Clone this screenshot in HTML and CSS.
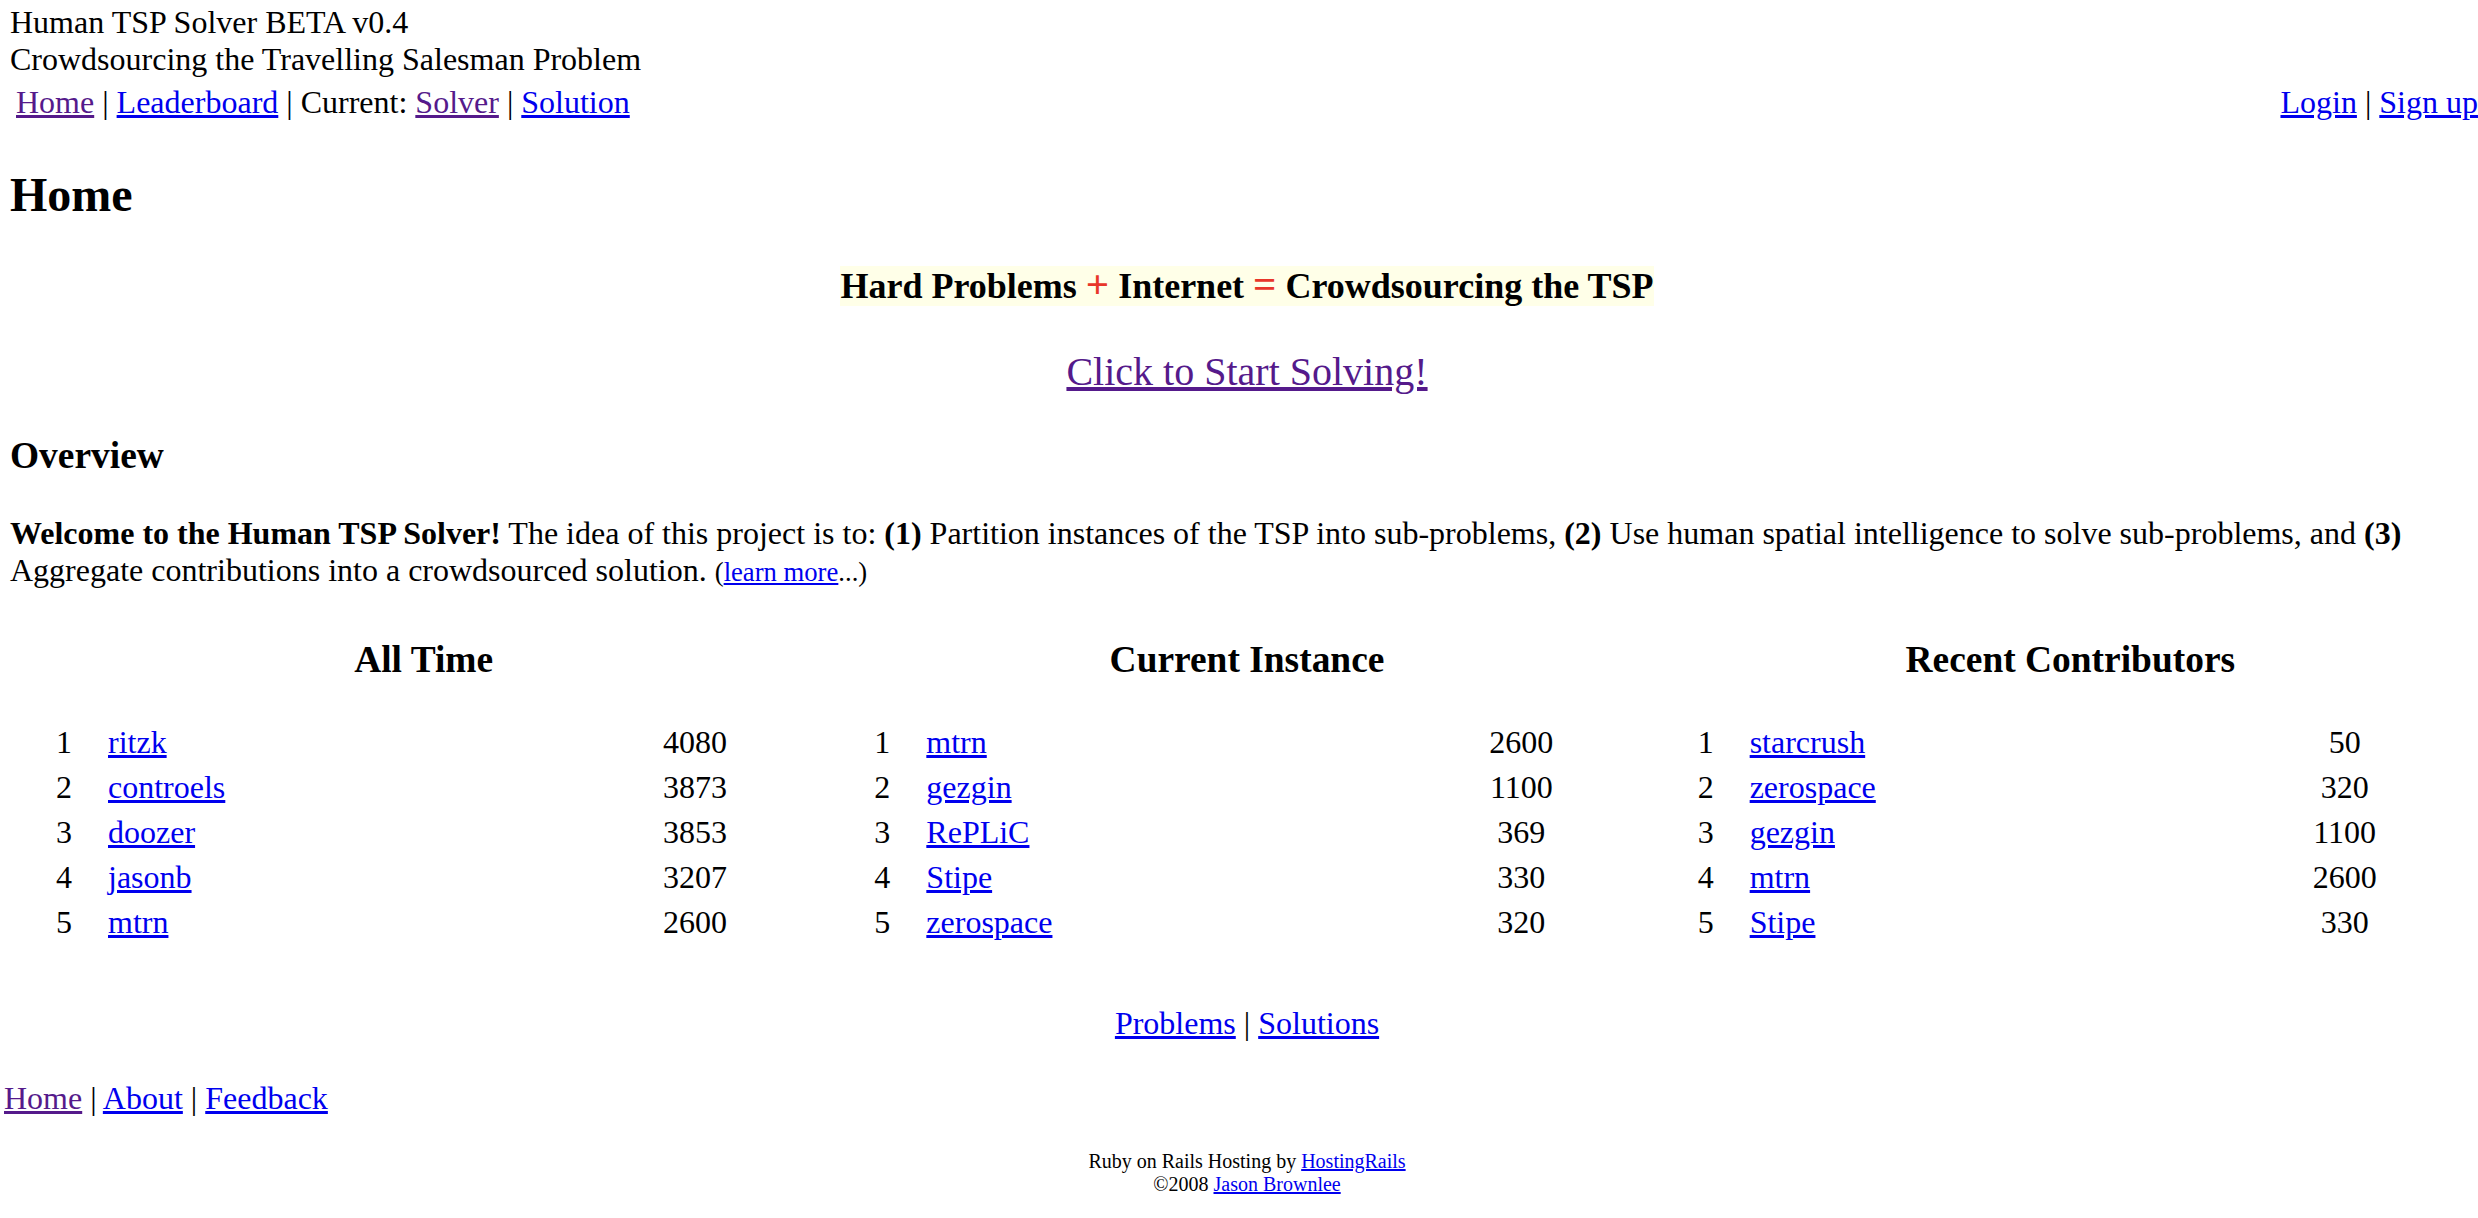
FILE: index.html
```html
<!DOCTYPE html>
<html>
<head>
<meta charset="utf-8">
<title>Human TSP Solver</title>
<link rel="stylesheet" href="styles.css">
</head>
<body>
<div class="site-header">
  <div>Human TSP Solver BETA v0.4</div>
  <div>Crowdsourcing the Travelling Salesman Problem</div>
</div>
<div class="page">
  <table class="nav">
    <tr>
      <td class="nav-left"><a class="visited" href="#">Home</a> | <a href="#">Leaderboard</a> | Current: <a class="visited" href="#">Solver</a> | <a href="#">Solution</a></td>
      <td class="nav-right"><a href="#">Login</a> | <a href="#">Sign up</a></td>
    </tr>
  </table>
  <div class="main">
    <h2>Home</h2>
    <p class="slogan"><span>Hard Problems <b class="op">+</b> Internet <b class="op">=</b> Crowdsourcing the TSP</span></p>
    <p class="start"><a class="visited" href="#">Click to Start Solving!</a></p>
    <h3 class="section">Overview</h3>
    <p class="intro"><b>Welcome to the Human TSP Solver!</b> The idea of this project is to: <b>(1)</b> Partition instances of the TSP into sub-problems, <b>(2)</b> Use human spatial intelligence to solve sub-problems, and <b>(3)</b> Aggregate contributions into a crowdsourced solution. <small>(<a href="#">learn more</a>...)</small></p>
    <table class="boards">
      <tr>
        <td>
          <h3>All Time</h3>
          <table class="ranking ranking-wide">
            <tr><td class="rank">1</td><td class="name"><a href="#">ritzk</a></td><td class="score">4080</td></tr>
            <tr><td class="rank">2</td><td class="name"><a href="#">controels</a></td><td class="score">3873</td></tr>
            <tr><td class="rank">3</td><td class="name"><a href="#">doozer</a></td><td class="score">3853</td></tr>
            <tr><td class="rank">4</td><td class="name"><a href="#">jasonb</a></td><td class="score">3207</td></tr>
            <tr><td class="rank">5</td><td class="name"><a href="#">mtrn</a></td><td class="score">2600</td></tr>
          </table>
        </td>
        <td>
          <h3>Current Instance</h3>
          <table class="ranking">
            <tr><td class="rank">1</td><td class="name"><a href="#">mtrn</a></td><td class="score">2600</td></tr>
            <tr><td class="rank">2</td><td class="name"><a href="#">gezgin</a></td><td class="score">1100</td></tr>
            <tr><td class="rank">3</td><td class="name"><a href="#">RePLiC</a></td><td class="score">369</td></tr>
            <tr><td class="rank">4</td><td class="name"><a href="#">Stipe</a></td><td class="score">330</td></tr>
            <tr><td class="rank">5</td><td class="name"><a href="#">zerospace</a></td><td class="score">320</td></tr>
          </table>
        </td>
        <td>
          <h3>Recent Contributors</h3>
          <table class="ranking">
            <tr><td class="rank">1</td><td class="name"><a href="#">starcrush</a></td><td class="score">50</td></tr>
            <tr><td class="rank">2</td><td class="name"><a href="#">zerospace</a></td><td class="score">320</td></tr>
            <tr><td class="rank">3</td><td class="name"><a href="#">gezgin</a></td><td class="score">1100</td></tr>
            <tr><td class="rank">4</td><td class="name"><a href="#">mtrn</a></td><td class="score">2600</td></tr>
            <tr><td class="rank">5</td><td class="name"><a href="#">Stipe</a></td><td class="score">330</td></tr>
          </table>
        </td>
      </tr>
    </table>
    <p class="links"><a href="#">Problems</a> | <a href="#">Solutions</a></p>
  </div>
</div>
<div class="footer-nav"><a class="visited" href="#">Home</a> | <a href="#">About</a> | <a href="#">Feedback</a></div>
<div class="credits">
  <div>Ruby on Rails Hosting by <a href="#">HostingRails</a></div>
  <div>&copy;2008 <a href="#">Jason Brownlee</a></div>
</div>
</body>
</html>
```
FILE: styles.css
```css
html {
  overflow-x: hidden;
}

body {
  margin: 0;
  padding-top: 4px;
  font-family: "Liberation Serif", "Times New Roman", serif;
  font-size: 32px;
  color: #000;
  background: #fff;
}

a {
  color: #0000ee;
}

a.visited {
  color: #551a8b;
}

.site-header {
  padding-left: 10px;
}

.page {
  margin-left: 10px;
  width: calc(100% - 4px);
}

.nav {
  width: 100%;
  border-spacing: 4px;
}

.nav td {
  padding: 2px;
}

.nav-right {
  text-align: right;
}

.main h2 {
  font-size: 48px;
  margin: 40px 0 0;
}

.slogan {
  margin: 42px 0 0;
  text-align: center;
  font-size: 36px;
  font-weight: bold;
  line-height: 41px;
}

.slogan span {
  background: #ffffe8;
}

.slogan .op {
  color: #e8362a;
  font-size: 41px;
  line-height: 1;
}

.start {
  margin: 41px 0 0;
  text-align: center;
  font-size: 40px;
}

.section {
  font-size: 37.44px;
  margin: 39px 0 0;
}

.intro {
  margin: 38px 0 0;
}

.intro small {
  font-size: 26.67px;
}

.boards {
  width: 100%;
  table-layout: fixed;
  border-spacing: 4px;
  margin-top: 43px;
}

.boards > tbody > tr > td {
  padding: 2px;
  vertical-align: top;
}

.boards h3 {
  font-size: 37.44px;
  text-align: center;
  margin: 0 0 37.44px;
}

.ranking {
  table-layout: fixed;
  width: 739px;
  margin-left: 29px;
  border-spacing: 4px;
}

.ranking-wide {
  width: 731px;
  margin-left: 34px;
}

.ranking td {
  padding: 2px;
}

.ranking .rank {
  width: 44px;
}

.ranking .score {
  width: 160px;
  text-align: center;
}

.links {
  margin: 52px 0 0;
  text-align: center;
}

.footer-nav {
  margin-top: 38px;
  padding-left: 4px;
}

.credits {
  margin-top: 33px;
  text-align: center;
  font-size: 20px;
  padding-left: 16px;
}
```
